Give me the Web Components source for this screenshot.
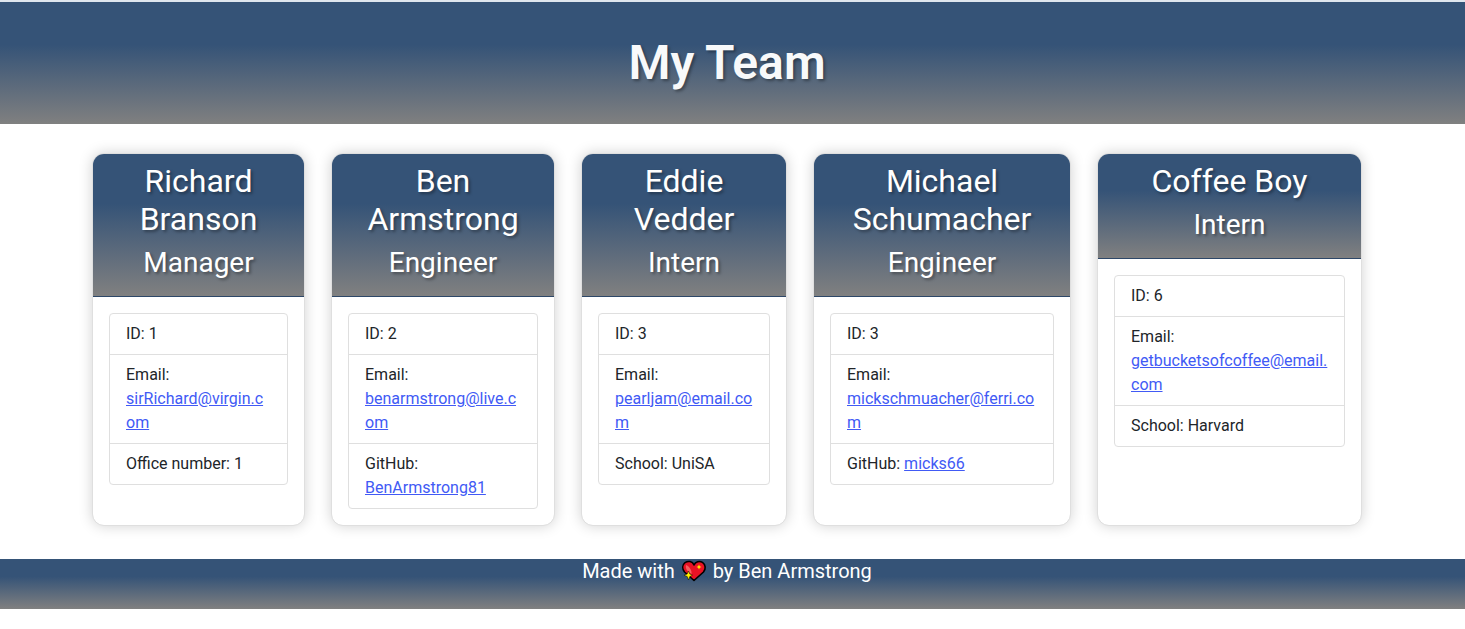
<!DOCTYPE html>
<html lang="en">
<head>
<meta charset="utf-8">
<meta name="viewport" content="width=device-width, initial-scale=1">
<title>My Team</title>
<style>
  :root {
    --navy: #355377;
    --band: linear-gradient(#355377, #355377 35%, #808080);
    --line: #dfdfdf;
    --link: #415af5;
    --text-shadow: 2px 2px 3px rgba(0, 0, 0, .35);
  }
  body {
    margin: 0;
    background: #fff;
    color: #212529;
    font: 400 16px/24px Roboto, "Liberation Sans", sans-serif;
  }
</style>
</head>
<body>
<team-page></team-page>

<template id="team-page">
  <style>
    :host { display: block; }
    main {
      display: grid;
      grid-template-columns: 213fr 224fr 206fr 258fr 265fr;
      gap: 26px;
      max-width: 1270px;
      margin: 0 auto;
      padding: 29px 11px 33px 0;
    }
    @media (max-width: 1100px) {
      main { grid-template-columns: repeat(auto-fit, minmax(206px, 1fr)); padding: 29px 24px 33px; }
    }
  </style>
  <team-banner>My Team</team-banner>
  <main>
    <team-card name="Richard Branson" role-name="Manager">
      <team-fact label="ID">1</team-fact>
      <team-fact label="Email" href="mailto:sirRichard@virgin.com">sirRichard@virgin.com</team-fact>
      <team-fact label="Office number">1</team-fact>
    </team-card>
    <team-card name="Ben Armstrong" role-name="Engineer">
      <team-fact label="ID">2</team-fact>
      <team-fact label="Email" href="mailto:benarmstrong@live.com">benarmstrong@live.com</team-fact>
      <team-fact label="GitHub" href="https://github.com/BenArmstrong81">BenArmstrong81</team-fact>
    </team-card>
    <team-card name="Eddie Vedder" role-name="Intern">
      <team-fact label="ID">3</team-fact>
      <team-fact label="Email" href="mailto:pearljam@email.com">pearljam@email.com</team-fact>
      <team-fact label="School">UniSA</team-fact>
    </team-card>
    <team-card name="Michael Schumacher" role-name="Engineer">
      <team-fact label="ID">3</team-fact>
      <team-fact label="Email" href="mailto:mickschmuacher@ferri.com">mickschmuacher@ferri.com</team-fact>
      <team-fact label="GitHub" href="https://github.com/micks66">micks66</team-fact>
    </team-card>
    <team-card name="Coffee Boy" role-name="Intern">
      <team-fact label="ID">6</team-fact>
      <team-fact label="Email" href="mailto:getbucketsofcoffee@email.com">getbucketsofcoffee@email.com</team-fact>
      <team-fact label="School">Harvard</team-fact>
    </team-card>
  </main>
  <team-footer></team-footer>
</template>

<template id="team-banner">
  <style>
    :host { display: block; }
    header {
      padding: 32px 11px 32px 0;
      border-top: 2px solid #dfe6ee;
      background: var(--band) padding-box;
      text-align: center;
    }
    h1 {
      margin: 0;
      color: #f8f9fa;
      font-size: 48px;
      line-height: 58px;
      font-weight: 600;
      text-shadow: var(--text-shadow);
    }
  </style>
  <header><h1><slot></slot></h1></header>
</template>

<template id="team-card">
  <style>
    :host { display: block; min-width: 0; }
    article {
      box-sizing: border-box;
      height: 100%;
      border: 1px solid var(--line);
      border-radius: 12px;
      background: #fff;
      background-clip: padding-box;
      box-shadow: 0 0 14px rgba(0, 0, 0, .18);
    }
    header {
      padding: 8px 16px;
      border-bottom: 1px solid #2d4768;
      border-radius: 11px 11px 0 0;
      background: var(--band);
      color: #fff;
      text-align: center;
      text-shadow: var(--text-shadow);
    }
    h2, h3 { margin: 0 0 8px; font-weight: 400; }
    h2 { font-size: 32px; line-height: 38px; }
    h3 { font-size: 28px; line-height: 34px; }
    .facts {
      margin: 16px;
      border: 1px solid var(--line);
      border-radius: 4px;
    }
  </style>
  <article>
    <header><h2></h2><h3></h3></header>
    <div class="facts" role="list"><slot></slot></div>
  </article>
</template>

<template id="team-fact">
  <style>
    :host {
      display: block;
      padding: 8px 16px;
      overflow-wrap: break-word;
    }
    :host(:not(:last-child)) { border-bottom: 1px solid var(--line); }
    a { color: var(--link); text-decoration: underline; }
  </style>
  <span></span> <slot></slot>
</template>

<template id="team-footer">
  <style>
    :host { display: block; }
    footer {
      box-sizing: border-box;
      min-height: 50px;
      padding-right: 11px;
      background: var(--band);
      color: #fff;
      font-size: 20px;
      line-height: 24px;
      text-align: center;
    }
    svg { width: 28px; height: 22px; vertical-align: -4px; }
  </style>
  <footer>Made with <svg viewBox="0 0 28 22" role="img" aria-label="sparkling heart">
    <path d="M14 5C12.500 1 8 .7 5 2.600C2 5 2.200 9 4.500 12L14 20.500L23.500 12C26 9 25.700 4.600 22.500 2.400C19.500 .5 15.500 1.500 14 5Z" fill="#e81224" stroke="#000" stroke-width="1.600" stroke-linejoin="round"/>
    <path d="M6 5C9 6 12 10 11.500 14L8 11.500C6 9.500 5.500 7 6 5Z" fill="#f4605f"/>
    <path d="M19 4.500L19.800 6.200L21.500 7L19.800 7.800L19 9.500L18.200 7.800L16.500 7L18.200 6.200Z" fill="#fff100"/>
    <path d="M8.500 11L9.800 14L12.500 15.200L9.800 16.500L8.500 20L7.200 16.500L4 15.200L7.200 14Z" fill="#fff100" stroke="#000" stroke-width=".5"/>
  </svg> by Ben Armstrong</footer>
</template>

<script>
  const stamp = (host, id) => {
    const root = host.attachShadow({ mode: "open" });
    root.append(document.getElementById(id).content.cloneNode(true));
    return root;
  };

  customElements.define("team-banner", class extends HTMLElement {
    constructor() { super(); stamp(this, "team-banner"); }
  });

  customElements.define("team-footer", class extends HTMLElement {
    constructor() { super(); stamp(this, "team-footer"); }
  });

  customElements.define("team-card", class extends HTMLElement {
    connectedCallback() {
      if (this.shadowRoot) return;
      const root = stamp(this, "team-card");
      root.querySelector("h2").textContent = this.getAttribute("name");
      root.querySelector("h3").textContent = this.getAttribute("role-name");
    }
  });

  customElements.define("team-fact", class extends HTMLElement {
    connectedCallback() {
      if (this.shadowRoot) return;
      const root = stamp(this, "team-fact");
      this.setAttribute("role", "listitem");
      root.querySelector("span").textContent = this.getAttribute("label") + ":";
      const href = this.getAttribute("href");
      if (href) {
        const link = document.createElement("a");
        link.href = href;
        const slot = root.querySelector("slot");
        slot.replaceWith(link);
        link.append(slot);
      }
    }
  });

  customElements.define("team-page", class extends HTMLElement {
    constructor() { super(); stamp(this, "team-page"); }
  });
</script>
</body>
</html>
